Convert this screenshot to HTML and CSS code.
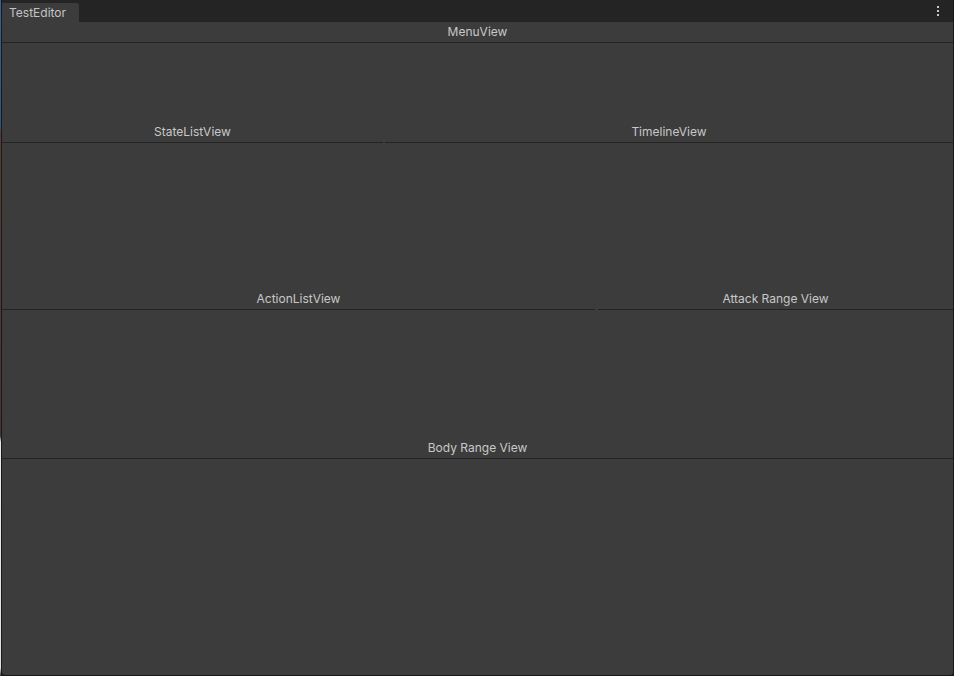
FILE: index.html
```html
<!DOCTYPE html>
<html>
<head>
<meta charset="utf-8">
<link rel="stylesheet" href="styles.css">
</head>
<body>
<div class="frame">
  <div class="edge"></div>
  <div class="window">
    <div class="tabbar">
      <div class="tab">TestEditor</div>
      <div class="menu"><span></span><span></span><span></span></div>
    </div>
    <div class="content">
      <div class="panel menu-panel"><div class="label">MenuView</div></div>
      <div class="row row1">
        <div class="panel state"><div class="label">StateListView</div></div>
        <div class="panel grow"><div class="label">TimelineView</div></div>
      </div>
      <div class="row row2">
        <div class="panel action"><div class="label">ActionListView</div></div>
        <div class="panel grow"><div class="label">Attack Range View</div></div>
      </div>
      <div class="panel body-range"><div class="label">Body Range View</div></div>
      <div class="rest"></div>
    </div>
  </div>
</div>
</body>
</html>
```
FILE: styles.css
```css
* { box-sizing: border-box; }
html, body { margin: 0; padding: 0; background: #1c1c1c; }
body { font-family: Inter, "Noto Sans", sans-serif; }
.frame { width: 954px; height: 676px; display: flex; }
.edge {
  width: 1px;
  flex-shrink: 0;
  background: linear-gradient(to bottom, #34649c 0px, #2c5584 128px, #5a3a36 132px, #4a3432 436px, #e8e8e8 442px, #e0e0e0 668px, #3c3c3c 676px);
}
.window {
  flex: 1;
  display: flex;
  flex-direction: column;
  border: 1px solid #191919;
  border-top: none;
  border-radius: 0 0 4px 4px;
  overflow: hidden;
  background: #3c3c3c;
}
.tabbar {
  height: 22px;
  background: #242424;
  display: flex;
  align-items: flex-end;
  position: relative;
}
.tab {
  width: 77px;
  height: 19px;
  background: #3c3c3c;
  color: #c4c4c4;
  font-size: 12px;
  line-height: 20px;
  padding-left: 7px;
  border-top-right-radius: 2px;
}
.menu {
  margin-left: auto;
  margin-right: 14px;
  align-self: flex-start;
  padding-top: 6px;
  display: flex;
  flex-direction: column;
  gap: 2px;
}
.menu span { width: 2px; height: 2px; background: #c8c8c8; display: block; }
.content { flex: 1; display: flex; flex-direction: column; }
.panel {
  display: flex;
  flex-direction: column;
  justify-content: flex-end;
  border-bottom: 1px solid #232323;
}
.label {
  text-align: center;
  color: #c8c8c8;
  font-size: 12px;
  line-height: 16px;
  padding-bottom: 2px;
}
.menu-panel { height: 21px; }
.row { display: flex; }
.row1 { height: 100px; gap: 2px; }
.row2 { height: 167px; gap: 3px; }
.row .panel { height: 100%; }
.state { width: 381px; }
.action { width: 593px; }
.grow { flex: 1; }
.body-range { height: 149px; }
.rest { flex: 1; }
```
